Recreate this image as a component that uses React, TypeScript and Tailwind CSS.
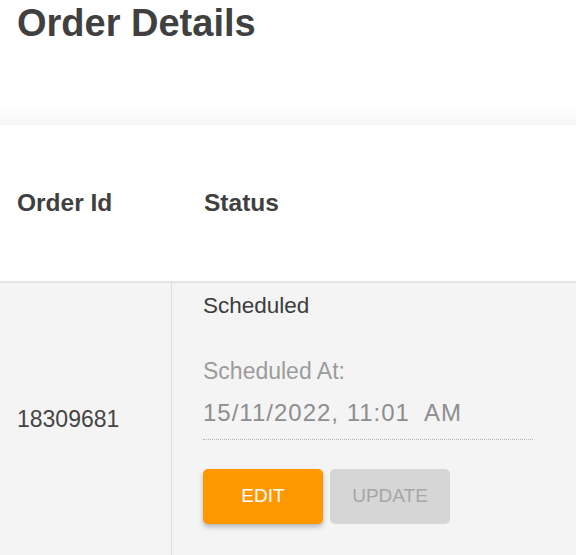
export default function App() {
  return (
    <div className="w-[576px] h-[555px] overflow-hidden bg-white font-['Liberation_Sans',Arial,sans-serif]">
      <h1 className="pl-[17px] pt-[4px] text-[38px] leading-none font-bold text-[#404040]">Order Details</h1>

      {/* faint shadow above the table */}
      <div className="mt-[66px] h-[17px] bg-gradient-to-b from-white to-[#f6f6f6]" />

      <div className="bg-white">
        <div className="flex h-[158px] items-center border-b-2 border-[#e4e4e4]">
          <div className="w-[172px] pl-[17px] text-[24.5px] font-bold text-[#404040]">Order Id</div>
          <div className="pl-[32px] text-[24.5px] font-bold text-[#404040]">Status</div>
        </div>

        <div className="flex h-[272px] bg-[#f4f4f4]">
          <div className="flex w-[172px] items-center border-r border-[#dedede] pl-[17px] text-[23px] text-[#444]">
            18309681
          </div>
          <div className="pl-[31px] pt-[8px]">
            <div className="text-[22.5px] leading-[30px] text-[#3c3c3c]">Scheduled</div>
            <div className="mt-[35px] text-[23px] leading-[30px] text-[#9c9c9c]">Scheduled At:</div>
            <div className="mt-[11px] w-[330px] border-b border-dotted border-[#b5b5b5] pb-[10px] text-[24px] leading-[32px] tracking-[1px] text-[#8e8e8e]">
              15/11/2022, 11:01&nbsp; AM
            </div>
            <div className="mt-[29px] flex gap-[7px]">
              <button className="h-[55px] w-[120px] rounded-[5px] bg-[#ff9800] text-[19px] text-white shadow-[0_3px_5px_rgba(0,0,0,0.25)]">
                EDIT
              </button>
              <button className="h-[55px] w-[120px] rounded-[5px] bg-[#d6d6d6] text-[19px] text-[#a6a6a6]">
                UPDATE
              </button>
            </div>
          </div>
        </div>
      </div>
    </div>
  );
}
